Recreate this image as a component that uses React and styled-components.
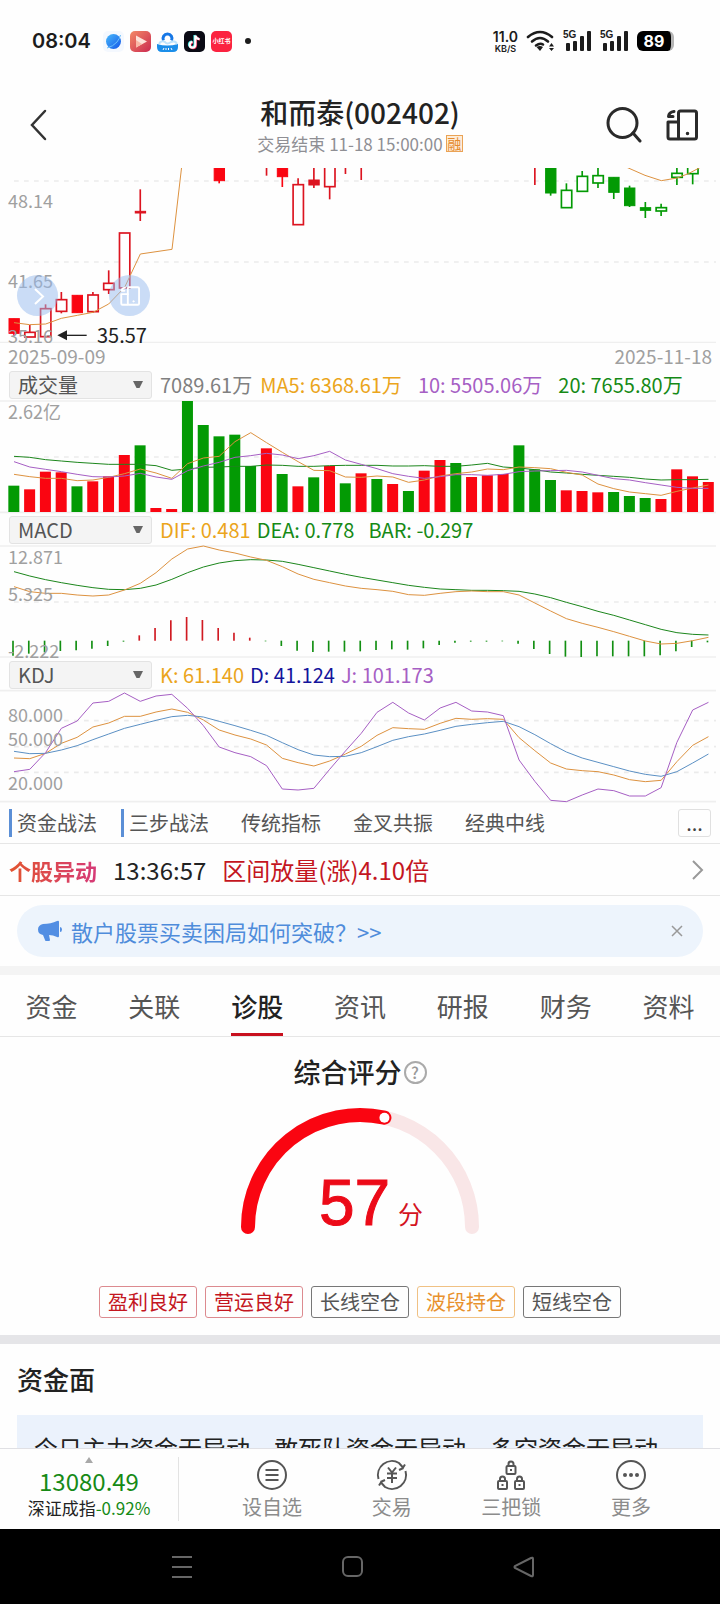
import { useState } from "react";
import styled, { createGlobalStyle } from "styled-components";

const RED = "#fa0511";
const DARK_RED = "#dc1420";
const GREEN = "#039a04";
const ORANGE = "#dd9240";
const PURPLE = "#a65fc4";
const BLUE = "#5b90c4";

// chart series are kept on the 3x device grid
const DENSITY = 3;
const STEP = 47.35;
const barX = (i) => 42 + STEP * i;

// [index, color, type, high, top, bottom, low]
const candles = [
  [0, RED, "solid", 476, 476, 520, 528],
  [1, DARK_RED, "hollow", 495, 517, 531, 531],
  [2, DARK_RED, "hollow", 433, 446, 530, 530],
  [3, DARK_RED, "hollow", 396, 419, 454, 460],
  [4, RED, "solid", 406, 406, 458, 458],
  [5, DARK_RED, "hollow", 396, 405, 455, 458],
  [6, DARK_RED, "hollow", 331, 370, 389, 402],
  [7, DARK_RED, "hollow", 219, 219, 384, 384],
  [8, DARK_RED, "solid", 88, 154, 159, 183],
  [13, RED, "solid", 20, 20, 62, 70],
  [16, DARK_RED, "line", 20, 20, 20, 47],
  [17, RED, "solid", 20, 20, 50, 81],
  [18, DARK_RED, "hollow", 55, 74, 194, 194],
  [19, DARK_RED, "solid", 20, 60, 75, 84],
  [20, DARK_RED, "hollow", 10, 10, 80, 118],
  [21, DARK_RED, "line", 20, 20, 20, 42],
  [22, DARK_RED, "line", 20, 20, 20, 60],
  [33, DARK_RED, "line", 20, 20, 20, 75],
  [34, GREEN, "solid", 20, 20, 99, 107],
  [35, GREEN, "hollow", 70, 91, 143, 143],
  [36, GREEN, "hollow", 33, 49, 94, 94],
  [37, GREEN, "hollow", 20, 47, 69, 84],
  [38, GREEN, "solid", 52, 52, 97, 117],
  [39, GREEN, "solid", 77, 84, 137, 141],
  [40, GREEN, "solid", 126, 143, 151, 174],
  [41, GREEN, "hollow", 131, 143, 153, 168],
  [42, GREEN, "hollow", 20, 40, 52, 75],
  [43, GREEN, "hollow", 10, 10, 41, 73],
];

const volumes = [
  272, 283, 230, 232, 274, 259, 244, 180, 151, 339, 342, 18, 90, 124, 119, 213,
  160, 237, 274, 247, 213, 265, 235, 252, 267, 288, 227, 195, 204, 246, 241,
  237, 151, 223, 255, 286, 288, 292, 291, 303, 309, 312, 223, 244, 261,
];
const volumeColors = "grrrgrrrgrrgggggrgrgrgrgrgrrgrrrgggrrrgggrrrr";

const volMa5 = [
  238, 245, 250, 250, 257, 255, 247, 236, 222, 234, 250, 206, 189, 184, 140,
  113, 143, 172, 200, 226, 227, 246, 247, 243, 246, 262, 255, 243, 236, 231,
  222, 224, 216, 218, 221, 232, 240, 267, 281, 291, 296, 301, 289, 279, 270,
];
const volMa10 = [
  200, 216, 223, 230, 238, 245, 246, 243, 235, 246, 253, 227, 213, 202, 187,
  182, 175, 180, 191, 182, 169, 195, 208, 221, 236, 244, 250, 245, 239, 239,
  241, 238, 230, 228, 227, 226, 231, 241, 251, 255, 263, 270, 277, 280, 280,
];
const volMa20 = [
  184, 187, 194, 198, 202, 205, 208, 208, 208, 212, 226, 222, 217, 216, 214,
  214, 210, 211, 214, 214, 212, 211, 211, 211, 213, 213, 212, 214, 214, 210,
  205, 216, 219, 224, 231, 234, 238, 241, 244, 247, 252, 255, 254, 254, 253,
];

const dif = [
  575, 590, 595, 595, 600, 603, 600, 585, 565, 533, 492, 462, 453, 465, 474,
  486, 496, 515, 537, 553, 563, 573, 580, 584, 589, 599, 601, 595, 590, 588,
  590, 590, 600, 624, 648, 671, 685, 697, 710, 724, 738, 747, 745, 737, 727,
];
const dea = [
  530, 543, 554, 563, 571, 578, 583, 584, 580, 570, 553, 533, 516, 504, 497,
  494, 495, 499, 508, 518, 528, 538, 547, 555, 563, 571, 577, 582, 584, 586,
  586, 587, 589, 597, 608, 622, 635, 649, 661, 675, 689, 703, 713, 718, 720,
];
const macdBars = [
  782, 776, 772, 768, 766, 761, 753, 740, 721, 699, 676, 666, 675, 699, 713,
  728, 739, 753, 767, 771, 770, 770, 769, 765, 763, 764, 760, 750, 743, 740,
  740, 739, 746, 762, 777, 785, 786, 784, 784, 784, 784, 781, 769, 756, 742,
];

const kLine = [
  309, 311, 295, 265, 247, 216, 204, 184, 184, 171, 162, 172, 195, 225, 240,
  252, 270, 310, 323, 333, 318, 297, 274, 241, 218, 221, 223, 205, 190, 193,
  191, 193, 248, 287, 324, 342, 347, 350, 360, 374, 380, 376, 320, 271, 245,
];
const dLine = [
  289, 296, 295, 285, 272, 254, 237, 220, 208, 196, 185, 181, 186, 199, 212,
  226, 241, 263, 284, 300, 305, 304, 293, 275, 256, 245, 237, 226, 214, 208,
  203, 199, 215, 239, 266, 291, 309, 322, 335, 348, 358, 364, 350, 324, 297,
];
const jLine = [
  350, 343, 293, 220, 198, 144, 139, 114, 139, 123, 118, 160, 212, 276, 293,
  305, 332, 402, 405, 400, 343, 288, 235, 172, 142, 174, 195, 159, 142, 168,
  171, 182, 315, 379, 436, 440, 420, 402, 407, 423, 423, 398, 262, 165, 142,
];

const strategies = [
  { name: "资金战法", marked: true },
  { name: "三步战法", marked: true },
  { name: "传统指标" },
  { name: "金叉共振" },
  { name: "经典中线" },
];

const tabs = ["资金", "关联", "诊股", "资讯", "研报", "财务", "资料"];

const ratings = [
  { name: "盈利良好", color: "#c4161f", border: "#dc8a8f" },
  { name: "营运良好", color: "#c4161f", border: "#dc8a8f" },
  { name: "长线空仓", color: "#555555", border: "#777777" },
  { name: "波段持仓", color: "#e8912d", border: "#f0c184" },
  { name: "短线空仓", color: "#555555", border: "#777777" },
];

const Series = ({ values, color }) => (
  <polyline
    points={values.map((v, i) => `${barX(i)},${v}`).join(" ")}
    fill="none"
    stroke={color}
    strokeWidth="3"
    strokeLinejoin="round"
  />
);

const Dashes = ({ y }) => (
  <line
    x1="42"
    x2="2148"
    y1={y}
    y2={y}
    stroke="#ebebeb"
    strokeWidth="5"
    strokeDasharray="14 16"
  />
);

const Rule = ({ y }) => (
  <line x1="0" x2="2148" y1={y} y2={y} stroke="#efefef" strokeWidth="5" />
);

const Chart = ({ height, offset, label, children, labels = [] }) => (
  <ChartSvg viewBox={`0 0 720 ${height}`} role="img" aria-label={label}>
    <g transform={`translate(0 ${-offset}) scale(${1 / DENSITY})`}>
      {children}
    </g>
    {labels.map(([text, y]) => (
      <AxisText key={text} x="8" y={y}>
        {text}
      </AxisText>
    ))}
  </ChartSvg>
);

const PriceChart = () => (
  <Overlay>
    <PriceClip>
      <Chart
        height={175}
        offset={8}
        label="日K线"
        labels={[
          ["48.14", 40],
          ["41.65", 120],
          ["35.16", 175],
        ]}
      >
        <Dashes y={63} />
        <Dashes y={306} />
        <Rule y={548} />
        {candles.map(([i, color, type, high, top, bottom, low]) => (
          <g key={i} stroke={color} strokeWidth="5">
            <line x1={barX(i)} x2={barX(i)} y1={high} y2={low} />
            {type !== "line" && (
              <rect
                x={barX(i) - 15}
                y={top}
                width="31"
                height={bottom - top}
                fill={type === "solid" ? color : "#fff"}
                strokeWidth={type === "solid" ? 3 : 5}
              />
            )}
          </g>
        ))}
        <g fill="none" stroke={ORANGE} strokeWidth="3">
          <polyline points="42,488 89,494 137,492 184,475 232,466 279,457 326,432 374,382 421,282 516,268 545,20" />
          <polyline points="1876,20 1935,46 1984,62 2031,54 2065,41 2105,20" />
        </g>
        <path d="M172 526 L201 511 V541 Z" fill="#222" />
        <path d="M195 526 H260" stroke="#222" strokeWidth="4" />
      </Chart>
    </PriceClip>
    <LowMark>35.57</LowMark>
    <RoundButton aria-label="展开" $left={17}>
      <svg width="40" height="40" fill="none" stroke="#fff" strokeWidth="2">
        <path d="M17 13 L25 20.500 L17 28" />
      </svg>
    </RoundButton>
    <RoundButton aria-label="横屏" $left={109}>
      <DeviceIcon size={20} color="#fff" />
    </RoundButton>
  </Overlay>
);

const DeviceIcon = ({ size, color }) => (
  <svg
    width={size}
    height={size}
    viewBox="0 0 32 32"
    fill="none"
    stroke={color}
    strokeWidth="3"
    strokeLinejoin="round"
    strokeLinecap="round"
  >
    <rect x="12.500" y="2" width="18" height="28" rx="2" />
    <path d="M12.500 13 H2 V28 Q2 30 4 30 H12.500" />
    <path d="M8 2.500 Q3 3 2.500 7.500 H7" />
    <circle cx="21.500" cy="24.500" r="1" fill={color} strokeWidth="1.500" />
  </svg>
);

const Indicator = ({ id, label, options, items, gap, extraGap }) => (
  <IndicatorBar>
    <SelectWrap>
      <Select id={id} aria-label={label} defaultValue={options[0]}>
        {options.map((option) => (
          <option key={option}>{option}</option>
        ))}
      </Select>
      <svg width="12" height="10" viewBox="0 0 12 10">
        <path d="M1 2 H11 L7.500 9 H4.500 Z" fill="#666" />
      </svg>
    </SelectWrap>
    <Legend $gap={gap} $extraGap={extraGap}>
      {items.map(([text, color]) => (
        <LegendItem key={text} $color={color}>
          {text}
        </LegendItem>
      ))}
    </Legend>
  </IndicatorBar>
);

const Signal = () => (
  <SignalWrap>
    <SignalText>5G</SignalText>
    <svg width="29" height="22" fill="#1c1c1c">
      <rect x="3" y="13" width="4" height="8" rx="1" />
      <rect x="10" y="11" width="4" height="10" rx="1" />
      <rect x="17" y="6" width="4" height="15" rx="1" />
      <rect x="24" y="1" width="4" height="20" rx="1" />
    </svg>
  </SignalWrap>
);

const StatusBar = () => (
  <StatusRow>
    <Clock>08:04</Clock>
    <AppIcons>
      <svg width="21" height="21" viewBox="0 0 21 21">
        <defs>
          <linearGradient id="planet" x1="0" y1="0" x2="1" y2="1">
            <stop offset="0" stopColor="#47b9fb" />
            <stop offset="1" stopColor="#1556e8" />
          </linearGradient>
        </defs>
        <rect width="21" height="21" rx="5" fill="#f4f8fe" />
        <circle cx="10.500" cy="10.500" r="7.500" fill="url(#planet)" />
        <path
          d="M4 17 Q10 15.500 14 11 Q17 7 17.500 4"
          fill="none"
          stroke="#6cc0fb"
          strokeWidth="1"
        />
      </svg>
      <svg width="21" height="21" viewBox="0 0 21 21">
        <defs>
          <linearGradient id="play" x1="0" y1="0" x2="1" y2="1">
            <stop offset="0" stopColor="#f38a67" />
            <stop offset="1" stopColor="#cb2a50" />
          </linearGradient>
        </defs>
        <rect width="21" height="21" rx="5" fill="url(#play)" />
        <path d="M6 4.500 L17 10.500 L6 16.500 Z" fill="#fde3da" />
        <path d="M6 9 L12 13 L6 16.500 Z" fill="#f9b8a6" />
      </svg>
      <svg width="21" height="21" viewBox="0 0 21 21">
        <path
          d="M0 13 Q10 16 21 13 V16 Q21 21 16 21 H5 Q0 21 0 16 Z"
          fill="#1b8ee9"
        />
        <path
          d="M6.500 9.500 A4.500 4.500 0 1 1 14.500 9.500"
          fill="none"
          stroke="#1677e6"
          strokeWidth="3"
        />
        <path
          d="M2 13 Q4 9 8 11 Q10 14 14 11 Q18 9 20 13"
          fill="none"
          stroke="#bfe4fb"
          strokeWidth="2"
        />
        <path d="M6 19 L7 17 M9 19 V17 M11.500 19 V17 M14 17 L15 19" stroke="#fff" />
      </svg>
      <svg width="21" height="21" viewBox="0 0 21 21">
        <rect width="21" height="21" rx="5" fill="#0a0a14" />
        <g fill="none" strokeWidth="2.200">
          <path
            d="M10.500 4 V13.500 A2.800 2.800 0 1 1 8 10.500 M10.500 4 Q11 7.500 15 8"
            stroke="#3be3e0"
          />
          <path
            d="M12 5 V14.500 A2.800 2.800 0 1 1 9 11.500 M12 5 Q12.500 8 16 8.500"
            stroke="#f02c56"
          />
          <path
            d="M11.300 4.500 V14 A2.800 2.800 0 1 1 8.500 11 M11.300 4.500 Q12 7.800 15.500 8.200"
            stroke="#fff"
          />
        </g>
      </svg>
      <RedApp>小红书</RedApp>
      <Dot />
    </AppIcons>
    <StatusRight>
      <Speed>
        <b>11.0</b>
        <small>KB/S</small>
      </Speed>
      <svg width="29" height="22" viewBox="0 0 29 22" fill="none">
        <g stroke="#1c1c1c" strokeWidth="2.600" strokeLinecap="round">
          <path d="M2 7 Q14 -3 26 7" />
          <path d="M6 11.500 Q14 4.500 22 11.500" />
          <path d="M10 15.500 Q14 12.500 17 14.500" />
        </g>
        <path
          d="M10.500 17 Q14 15 17 17 L14 21 Z M23 16.500 L25.500 13 L28 16.500 Z M23 18 H28 L25.500 21 Z"
          fill="#1c1c1c"
        />
      </svg>
      <Signal />
      <Signal />
      <Battery>89</Battery>
    </StatusRight>
  </StatusRow>
);

const Gauge = ({ score }) => {
  const angle = Math.PI * (1 - score / 100);
  const x = 120 + 112 * Math.cos(angle);
  const y = 127 - 112 * Math.sin(angle);

  return (
    <GaugeSvg viewBox="0 0 240 140" role="img" aria-label={`${score}分`}>
      <g fill="none" strokeWidth="14" strokeLinecap="round">
        <path d="M8 127 A112 112 0 0 1 232 127" stroke="#f9e6e7" />
        <path d={`M8 127 A112 112 0 0 1 ${x} ${y}`} stroke={RED} />
      </g>
      <circle cx={x} cy={y} r="5" fill="#fff" />
      <ScoreText x="79" y="125">
        {score}
      </ScoreText>
      <ScoreUnit x="158" y="124">
        分
      </ScoreUnit>
    </GaugeSvg>
  );
};

const Lock = ({ x, y }) => (
  <g>
    <rect x={x} y={y} width="9" height="8" rx="1" />
    <path
      d={`M${x + 2} ${y} V${y - 2} Q${x + 2} ${y - 4.5} ${x + 4.5} ${y - 4.5} Q${x + 7} ${y - 4.5} ${x + 7} ${y - 2} V${y}`}
    />
    <path d={`M${x + 4.5} ${y + 3} V${y + 5}`} />
  </g>
);

const BottomBar = () => (
  <Bottom>
    <Quote>
      <svg width="8" height="6">
        <path d="M4 0 L8 6 H0 Z" fill="#a8a8a8" />
      </svg>
      <QuotePrice>13080.49</QuotePrice>
      <QuoteName>
        深证成指<span>-0.92%</span>
      </QuoteName>
    </Quote>
    <Actions>
      <Action>
        <ActionIcon viewBox="0 0 32 32">
          <circle cx="16" cy="16" r="14" />
          <path d="M9.500 11 H22.500 M9.500 16 H22.500 M9.500 21 H22.500" />
        </ActionIcon>
        设自选
      </Action>
      <Action>
        <ActionIcon viewBox="0 0 32 32">
          <path d="M2.500 20 A14 14 0 0 1 23 4 L27 8.500 L29 5.500 M27.500 9 L23 11" />
          <path d="M29.500 12 A14 14 0 0 1 9 28 L5 23.500 L3 26.500 M4.500 23 L9 21" />
          <path d="M12 8.500 L16 13.500 L20 8.500 M16 13.500 V24 M11 14.500 H21 M11 19 H21" />
        </ActionIcon>
        交易
      </Action>
      <Action>
        <ActionIcon viewBox="0 0 32 32">
          <Lock x={11.5} y={7} />
          <Lock x={3} y={22} />
          <Lock x={20} y={22} />
        </ActionIcon>
        三把锁
      </Action>
      <Action>
        <ActionIcon viewBox="0 0 32 32">
          <circle cx="16" cy="16" r="14" />
          <g fill="#555" stroke="none">
            <circle cx="10" cy="16" r="2" />
            <circle cx="16" cy="16" r="2" />
            <circle cx="22" cy="16" r="2" />
          </g>
        </ActionIcon>
        更多
      </Action>
    </Actions>
  </Bottom>
);

const App = () => {
  const [activeTab, setActiveTab] = useState("诊股");
  const [showPromo, setShowPromo] = useState(true);

  return (
    <>
      <GlobalStyle />
      <Screen>
        <StatusBar />
        <Header>
          <IconButton aria-label="返回">
            <svg width="26" height="32" fill="none" stroke="#333" strokeWidth="2.500">
              <path d="M23 2 L10 16 L23 30" strokeLinecap="round" />
            </svg>
          </IconButton>
          <Heading>
            <h1>和而泰(002402)</h1>
            <p>
              交易结束 11-18 15:00:00 <Badge>融</Badge>
            </p>
          </Heading>
          <HeaderActions>
            <IconButton aria-label="搜索">
              <svg width="36" height="36" fill="none" stroke="#2a2a2a" strokeWidth="3">
                <circle cx="16.500" cy="16" r="14.500" />
                <path d="M27 26 L34 34" strokeLinecap="round" />
              </svg>
            </IconButton>
            <IconButton aria-label="横屏">
              <DeviceIcon size={32} color="#2a2a2a" />
            </IconButton>
          </HeaderActions>
        </Header>

        <Content>
          <PriceChart />
          <Dates>
            <span>2025-09-09</span>
            <span>2025-11-18</span>
          </Dates>

          <Indicator
            id="volume"
            label="副图一"
            options={["成交量", "MACD", "KDJ"]}
            gap={8}
            extraGap={8}
            items={[
              ["7089.61万", "#808080"],
              ["MA5: 6368.61万", "#eba51c"],
              ["10: 5505.06万", PURPLE],
              ["20: 7655.80万", "#168a16"],
            ]}
          />
          <Chart height={114} offset={5} label="成交量" labels={[["2.62亿", 19]]}>
            <Rule y={18} />
            <Dashes y={186} />
            <Rule y={352} />
            {volumes.map((top, i) => (
              <rect
                key={i}
                x={barX(i) - 17}
                y={top}
                width="33"
                height={351 - top}
                fill={volumeColors[i] === "g" ? GREEN : RED}
              />
            ))}
            <Series values={volMa20} color="#1c861c" />
            <Series values={volMa5} color={ORANGE} />
            <Series values={volMa10} color={PURPLE} />
          </Chart>

          <Indicator
            id="macd"
            label="副图二"
            options={["MACD", "KDJ", "成交量"]}
            gap={6}
            extraGap={8}
            items={[
              ["DIF: 0.481", "#eba51c"],
              ["DEA: 0.778", "#168a16"],
              ["BAR: -0.297", "#168a16"],
            ]}
          />
          <Chart
            height={114}
            offset={150}
            label="MACD"
            labels={[
              ["12.871", 19],
              ["5.325", 56],
              ["-2.222", 113],
            ]}
          >
            <Rule y={453} />
            <Dashes y={621} />
            <Rule y={786} />
            {macdBars.map((end, i) => (
              <line
                key={i}
                x1={barX(i) - 3}
                x2={barX(i) - 3}
                y1="737"
                y2={end}
                stroke={end < 737 ? "#d01a22" : "#128f12"}
                strokeWidth="5"
              />
            ))}
            <Series values={dea} color="#1c861c" />
            <Series values={dif} color={ORANGE} />
          </Chart>

          <Indicator
            id="kdj"
            label="副图三"
            options={["KDJ", "MACD", "成交量"]}
            gap={6}
            extraGap={0}
            items={[
              ["K: 61.140", "#eba51c"],
              ["D: 41.124", "#14149c"],
              ["J: 101.173", PURPLE],
            ]}
          />
          <Chart
            height={112}
            offset={35}
            label="KDJ"
            labels={[
              ["80.000", 32],
              ["50.000", 56],
              ["20.000", 100],
            ]}
          >
            <Rule y={107} />
            <Dashes y={197} />
            <Dashes y={275} />
            <Dashes y={352} />
            <Rule y={440} />
            <Series values={kLine} color={ORANGE} />
            <Series values={dLine} color={BLUE} />
            <Series values={jLine} color={PURPLE} />
          </Chart>

          <Strategies>
            {strategies.map(({ name, marked }) => (
              <Strategy key={name} $marked={marked}>
                {name}
              </Strategy>
            ))}
            <MoreButton aria-label="更多指标">...</MoreButton>
          </Strategies>

          <EventRow href="#events">
            <EventTag>个股异动</EventTag>
            <time>13:36:57</time>
            <EventText>区间放量(涨)4.10倍</EventText>
            <svg width="12" height="20" fill="none" stroke="#999" strokeWidth="2">
              <path d="M1 1 L10 10 L1 19" />
            </svg>
          </EventRow>

          {showPromo && (
            <Promo>
              <svg width="26" height="22" viewBox="0 0 26 22" fill="#528ee3">
                <path d="M6 4 Q14 4 20 1 Q22 0 22 2 V16 Q22 18 20 17 Q16 15 12 15 L13 20 Q13 21 12 21 H9 Q8 21 8 20 L6 15 Q1 14 1 9.500 Q1 5 6 4 Z" />
                <path d="M23 7 Q25 7 25 9.500 Q25 12 23 12 Z" />
              </svg>
              <a href="#promo">散户股票买卖困局如何突破？&gt;&gt;</a>
              <CloseButton aria-label="关闭" onClick={() => setShowPromo(false)}>
                <svg width="12" height="12" stroke="#999" strokeWidth="1.500">
                  <path d="M1 1 L11 11 M11 1 L1 11" />
                </svg>
              </CloseButton>
            </Promo>
          )}

          <Divider $color="#f4f4f4" />
          <Tabs>
            {tabs.map((tab) => (
              <Tab
                key={tab}
                $active={tab === activeTab}
                onClick={() => setActiveTab(tab)}
              >
                <span>{tab}</span>
              </Tab>
            ))}
          </Tabs>

          <ScoreSection>
            <ScoreTitle>
              综合评分
              <HelpButton aria-label="评分说明">?</HelpButton>
            </ScoreTitle>
            <Gauge score={57} />
            <Ratings>
              {ratings.map(({ name, color, border }) => (
                <Rating key={name} $color={color} $border={border}>
                  {name}
                </Rating>
              ))}
            </Ratings>
          </ScoreSection>

          <Divider $color="#e5e5e8" />
          <FundSection>
            <h2>资金面</h2>
            <FundNote>今日主力资金无异动，敢死队资金无异动，多空资金无异动</FundNote>
          </FundSection>
        </Content>

        <BottomBar />
        <SystemNav>
          <button aria-label="任务">
            <svg width="22" height="28" stroke="#666" strokeWidth="2">
              <path d="M1 4 H21 M1 14 H21 M1 24 H21" />
            </svg>
          </button>
          <button aria-label="主页">
            <svg width="22" height="22" fill="none" stroke="#666" strokeWidth="2">
              <rect x="1" y="1" width="19" height="19" rx="5" />
            </svg>
          </button>
          <button aria-label="后退">
            <svg width="22" height="22" fill="none" stroke="#666" strokeWidth="2">
              <path d="M18 2 Q20 1 20 3 V19 Q20 21 18 20 L2 12 Q1 11 2 10 Z" />
            </svg>
          </button>
        </SystemNav>
      </Screen>
    </>
  );
};

const GlobalStyle = createGlobalStyle`
  * {
    box-sizing: border-box;
  }

  body {
    margin: 0;
    background-color: #fefefe;
    color: #222;
    font-family: "Noto Sans CJK SC", "Noto Sans", sans-serif;
  }

  h1, h2, p {
    margin: 0;
    font-weight: 500;
  }

  button {
    margin: 0;
    padding: 0;
    border: none;
    background: none;
    color: inherit;
    font: inherit;
    cursor: pointer;
  }

  a {
    color: inherit;
    text-decoration: none;
  }

  svg {
    display: block;
    flex-shrink: 0;
  }
`;

const Screen = styled.div`
  display: flex;
  flex-direction: column;
  height: 100vh;
`;

const StatusRow = styled.div`
  display: flex;
  align-items: center;
  flex-shrink: 0;
  height: 82px;
  padding: 0 46px 0 32px;
  color: #1c1c1c;
  font-family: Inter, sans-serif;
`;

const Clock = styled.time`
  font-size: 20px;
  font-weight: 600;
  line-height: 24px;
`;

const AppIcons = styled.div`
  display: flex;
  align-items: center;
  gap: 6px;
  margin-left: 12px;
`;

const RedApp = styled.span`
  width: 21px;
  height: 21px;
  border-radius: 5px;
  background-color: #fb2340;
  color: #fff;
  font-family: "Noto Sans CJK SC", sans-serif;
  font-size: 6px;
  font-weight: 700;
  line-height: 20px;
  text-align: center;
`;

const Dot = styled.span`
  width: 6px;
  height: 6px;
  margin-left: 7px;
  border-radius: 50%;
  background-color: #1c1c1c;
`;

const StatusRight = styled.div`
  display: flex;
  align-items: center;
  gap: 8px;
  margin-left: auto;
`;

const Speed = styled.div`
  display: grid;
  justify-items: center;

  b {
    font-size: 14px;
    font-weight: 600;
    line-height: 14px;
  }

  small {
    font-size: 9px;
    font-weight: 600;
    line-height: 9px;
  }
`;

const SignalWrap = styled.div`
  position: relative;
`;

const SignalText = styled.span`
  position: absolute;
  left: 0;
  top: 0;
  font-family: "Liberation Sans", sans-serif;
  font-size: 10px;
  font-weight: 700;
  line-height: 10px;
`;

const Battery = styled.div`
  width: 37px;
  border-right: 3px solid #b5b5b5;
  border-radius: 6px;
  background-color: #000;
  color: #fff;
  font-size: 16px;
  font-weight: 700;
  line-height: 20px;
  text-align: center;
`;

const Header = styled.header`
  display: grid;
  grid-template-columns: 1fr auto 1fr;
  align-items: center;
  flex-shrink: 0;
  height: 86px;
  padding: 0 22px;
`;

const IconButton = styled.button`
  justify-self: start;
`;

const Heading = styled.div`
  display: grid;
  justify-items: center;
  gap: 3px;
  padding-bottom: 2px;

  h1 {
    font-size: 28px;
    line-height: 36px;
  }

  p {
    display: flex;
    align-items: center;
    gap: 3px;
    color: #8f8f94;
    font-size: 17px;
    font-weight: 400;
    line-height: 22px;
  }
`;

const Badge = styled.span`
  width: 17px;
  height: 17px;
  border: 1px solid #eaa356;
  background-color: #fdecd8;
  color: #e58a2b;
  font-size: 14px;
  line-height: 15px;
  text-align: center;
`;

const HeaderActions = styled.div`
  display: flex;
  align-items: center;
  justify-self: end;
  gap: 24px;
`;

const Content = styled.main`
  flex: 1;
  min-height: 0;
  overflow-y: auto;
  scrollbar-width: none;
`;

const Overlay = styled.div`
  position: relative;
`;

const ChartSvg = styled.svg`
  width: 100%;
  height: auto;
  overflow: visible;
`;

// candles above the visible price range stay hidden
const PriceClip = styled.div`
  overflow-x: visible;
  overflow-y: clip;
  overflow-clip-margin: 4px;
`;

const AxisText = styled.text`
  fill: #a0a0a0;
  font-size: 18px;
`;

const LowMark = styled.span`
  position: absolute;
  left: 97px;
  bottom: -6px;
  font-size: 20px;
  line-height: 28px;
`;

const RoundButton = styled.button`
  position: absolute;
  left: ${({ $left }) => $left}px;
  bottom: 27px;
  display: grid;
  place-items: center;
  width: 41px;
  height: 41px;
  border-radius: 50%;
  background-color: rgba(150, 185, 238, 0.5);
`;

const Dates = styled.div`
  display: flex;
  justify-content: space-between;
  padding: 0 8px;
  color: #a0a0a0;
  font-size: 19px;
  line-height: 26px;
`;

const IndicatorBar = styled.div`
  display: flex;
  align-items: center;
  gap: 8px;
  height: 31px;
  padding-left: 9px;
`;

const SelectWrap = styled.div`
  position: relative;
  width: 143px;

  svg {
    position: absolute;
    right: 8px;
    top: 8px;
    pointer-events: none;
  }
`;

const Select = styled.select`
  display: block;
  width: 100%;
  height: 28px;
  padding: 0 8px;
  border: 1px solid #e3e3e3;
  border-radius: 3px;
  background-color: #f4f4f4;
  color: #555;
  font-family: inherit;
  font-size: 20px;
  line-height: 26px;
  appearance: none;
`;

const Legend = styled.div`
  display: flex;
  gap: ${({ $gap }) => $gap}px;
  font-size: 20px;
  line-height: 28px;
  white-space: nowrap;

  span:nth-child(n + 3) {
    margin-left: ${({ $extraGap }) => $extraGap}px;
  }
`;

const LegendItem = styled.span`
  color: ${({ $color }) => $color};
`;

const Strategies = styled.div`
  display: flex;
  align-items: center;
  height: 42px;
  padding: 0 9px;
  border-bottom: 1px solid #e6e6e6;
`;

const Strategy = styled.button`
  width: 112px;
  height: 28px;
  padding-left: 5px;
  border-left: 3px solid ${({ $marked }) => ($marked ? "#5b8fd6" : "transparent")};
  color: #555;
  font-size: 20px;
  line-height: 28px;
  text-align: left;
`;

const MoreButton = styled.button`
  width: 33px;
  height: 28px;
  margin-left: auto;
  border: 1px solid #e0e0e0;
  border-radius: 3px;
  color: #444;
  font-size: 20px;
  line-height: 26px;
`;

const EventRow = styled.a`
  display: flex;
  align-items: center;
  gap: 16px;
  height: 52px;
  padding: 0 16px 0 9px;
  border-bottom: 1px solid #e6e6e6;
  font-size: 24px;
  line-height: 32px;

  svg {
    margin-left: auto;
  }
`;

const EventTag = styled.span`
  background: linear-gradient(90deg, #e2542f, #d63a78);
  background-clip: text;
  color: transparent;
  font-size: 22px;
  font-weight: 700;
`;

const EventText = styled.span`
  color: #c4161f;
`;

const Promo = styled.div`
  display: flex;
  align-items: center;
  gap: 8px;
  height: 52px;
  margin: 9px 17px;
  padding: 0 20px;
  border-radius: 26px;
  background-color: #edf4fc;
  color: #4f8cdb;
  font-size: 22px;
  line-height: 32px;
`;

const CloseButton = styled.button`
  margin-left: auto;
`;

const Divider = styled.div`
  height: 9px;
  background-color: ${({ $color }) => $color};
`;

const Tabs = styled.nav`
  display: flex;
  height: 62px;
  border-bottom: 1px solid #e6e6e6;
`;

const Tab = styled.button`
  flex: 1;
  color: ${({ $active }) => ($active ? "#222" : "#555")};
  font-size: 26px;
  font-weight: ${({ $active }) => ($active ? 500 : 400)};

  span {
    display: inline-block;
    height: 61px;
    border-bottom: 3px solid
      ${({ $active }) => ($active ? "#c8101e" : "transparent")};
    line-height: 62px;
  }
`;

const ScoreSection = styled.section`
  display: flex;
  flex-direction: column;
  align-items: center;
  padding: 17px 0;
`;

const ScoreTitle = styled.h2`
  display: flex;
  align-items: center;
  gap: 2px;
  font-size: 27px;
  line-height: 36px;
`;

const HelpButton = styled.button`
  width: 23px;
  height: 23px;
  border: 2px solid #aaa;
  border-radius: 50%;
  color: #999;
  font-size: 16px;
  line-height: 18px;
`;

const GaugeSvg = styled.svg`
  width: 240px;
  margin: 10px 0 46px;
`;

const ScoreText = styled.text`
  fill: #ec0a18;
  font-family: "Liberation Sans", sans-serif;
  font-size: 64px;
  stroke: #ec0a18;
  stroke-width: 1px;
`;

const ScoreUnit = styled.text`
  fill: #d4141f;
  font-size: 25px;
`;

const Ratings = styled.div`
  display: flex;
  gap: 8px;
`;

const Rating = styled.span`
  width: 98px;
  border: 1px solid ${({ $border }) => $border};
  border-radius: 3px;
  color: ${({ $color }) => $color};
  font-size: 20px;
  line-height: 30px;
  text-align: center;
`;

const FundSection = styled.section`
  padding: 17px 17px 24px;

  h2 {
    font-size: 26px;
    line-height: 36px;
  }
`;

const FundNote = styled.p`
  margin-top: 18px;
  padding: 15px 17px;
  background-color: #ebf2fc;
  font-size: 24px;
  font-weight: 400;
  line-height: 36px;
`;

const Bottom = styled.footer`
  display: flex;
  align-items: center;
  flex-shrink: 0;
  height: 81px;
  border-top: 1px solid #e0e0e4;
`;

const Quote = styled.div`
  display: flex;
  flex-direction: column;
  align-items: center;
  width: 179px;
  height: 64px;
  border-right: 1px solid #e3e3e3;
`;

const QuotePrice = styled.strong`
  margin-top: 2px;
  color: #168a16;
  font-size: 24px;
  font-weight: 400;
  line-height: 32px;
`;

const QuoteName = styled.span`
  font-size: 17px;
  line-height: 22px;

  span {
    color: #168a16;
  }
`;

const Actions = styled.div`
  display: flex;
  flex: 1;
  justify-content: space-between;
  padding: 2px 69px 0 63px;
`;

const Action = styled.button`
  display: grid;
  justify-items: center;
  gap: 2px;
  color: #8c8c8c;
  font-size: 20px;
  line-height: 28px;
`;

const ActionIcon = styled.svg`
  width: 32px;
  height: 32px;
  fill: none;
  stroke: #555;
  stroke-width: 2px;
`;

const SystemNav = styled.nav`
  display: grid;
  grid-template-columns: repeat(3, 1fr);
  justify-items: center;
  align-items: center;
  flex-shrink: 0;
  height: 75px;
  padding: 0 111px 0 96px;
  background-color: #000;
`;

export default App;
